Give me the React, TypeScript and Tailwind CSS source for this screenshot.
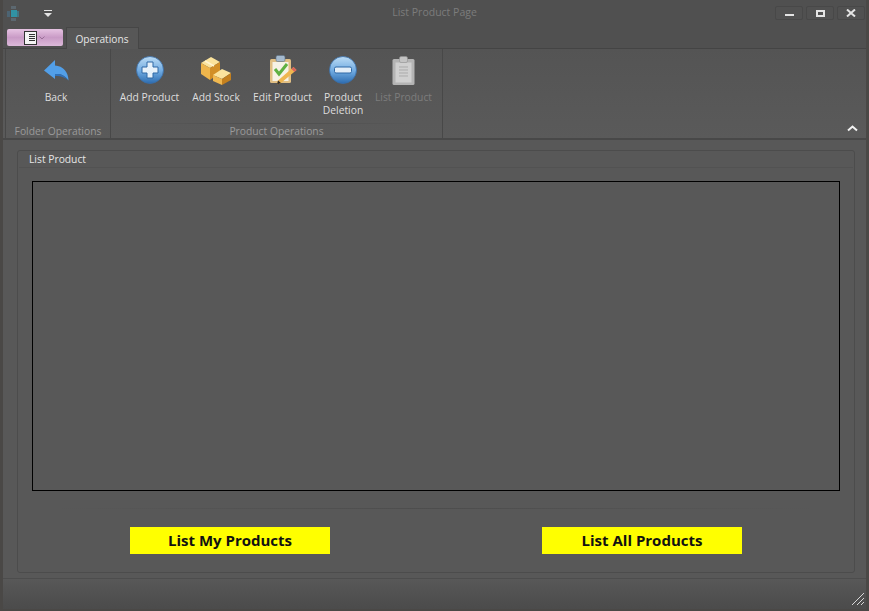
import { ReactNode } from 'react';

const font = { fontFamily: '"Open Sans", "Noto Sans", sans-serif' };

const BackIcon = () => (
  <svg width="25" height="21" viewBox="0 0 25 21">
    <path d="M11 0 L0 10.5 L11 19 L11 14 C16 13.5 21 15 24.5 20.5 C24.5 12 19 6 11 5.5 Z" fill="#529fe8" />
    <path d="M11 14 C16 13.5 21 15 24.5 20.5 C21 17 16 15.5 11 16 Z" fill="#2f70b8" />
  </svg>
);

const RoundIcon = ({ minus }: { minus?: boolean }) => (
  <svg width="28" height="28" viewBox="0 0 28 28">
    <defs>
      <linearGradient id={minus ? 'gm' : 'gp'} x1="0" y1="0" x2="0" y2="1">
        <stop offset="0" stopColor="#bcdcf5" />
        <stop offset="0.55" stopColor="#6ea9e0" />
        <stop offset="1" stopColor="#2c6cb0" />
      </linearGradient>
    </defs>
    <circle cx="14" cy="14" r="13.5" fill={`url(#${minus ? 'gm' : 'gp'})`} stroke="#3a6fa8" strokeWidth="0.8" />
    {minus ? (
      <rect x="5.5" y="11" width="17" height="6" rx="1.5" fill="#e3eef8" stroke="#2f69a6" />
    ) : (
      <path d="M11 6 H17 V11 H22 V17 H17 V22 H11 V17 H6 V11 H11 Z" fill="#e6f1fa" stroke="#2f69a6" strokeLinejoin="round" />
    )}
  </svg>
);

const BoxesIcon = () => (
  <svg width="32" height="29" viewBox="0 0 32 29">
    <path d="M1 7 L11 1 L20 6 L10 12 Z" fill="#fbe39c" />
    <path d="M1 7 L10 12 L10 24 L1 18 Z" fill="#eeb54c" />
    <path d="M10 12 L20 6 L20 17 L10 24 Z" fill="#d28f27" />
    <path d="M13 19 L22 13 L31 17 L22 23 Z" fill="#fbe39c" />
    <path d="M13 19 L22 23 L22 29 L13 25 Z" fill="#f0b850" />
    <path d="M22 23 L31 17 L31 24 L22 29 Z" fill="#c4801e" />
    <path d="M5 5 L14 10" stroke="#fff3cf" strokeWidth="1.5" />
  </svg>
);

const EditIcon = () => (
  <svg width="28" height="30" viewBox="0 0 28 30">
    <rect x="1" y="4" width="21" height="24" rx="1.5" fill="#e1bf84" />
    <rect x="3.5" y="7" width="16" height="19" fill="#f6f2e6" />
    <rect x="7" y="0.5" width="9" height="6" rx="1.5" fill="#a5bace" stroke="#5d7085" strokeWidth="0.6" />
    <path d="M6 14 L10 19 L18 9" fill="none" stroke="#5fb043" strokeWidth="3" />
    <path d="M24.5 12 L27.5 15 L12 28 L8 29.5 L9 25.5 Z" fill="#efb650" />
    <path d="M24.5 12 L27.5 15 L25.5 17 L22.5 14 Z" fill="#d9645a" />
    <path d="M8 29.5 L9 25.5 L12 28 Z" fill="#33302c" />
  </svg>
);

const ClipboardIcon = () => (
  <svg width="23" height="29" viewBox="0 0 23 29">
    <rect x="0.5" y="3" width="22" height="26" rx="1.5" fill="#b4b4b4" />
    <rect x="3.5" y="6.5" width="16" height="20" fill="#d0d0d0" />
    <rect x="7.5" y="0.5" width="8" height="6" rx="1.5" fill="#c4c4c4" stroke="#929292" strokeWidth="0.6" />
    <path d="M7 11 H16 M7 14 H16 M7 17 H16 M7 20 H16" stroke="#ababab" />
  </svg>
);

const RibbonButton = ({
  icon,
  label,
  width,
  disabled,
}: {
  icon: ReactNode;
  label: ReactNode;
  width: string;
  disabled?: boolean;
}) => (
  <div className={`flex flex-col items-center pt-[5px] ${width}`}>
    <div className="flex h-[32px] items-center justify-center">{icon}</div>
    <div
      className={`mt-[5px] text-center text-[10.3px] leading-[13px] whitespace-nowrap ${
        disabled ? 'text-[#7d7d7d]' : 'text-[#dedede]'
      }`}
    >
      {label}
    </div>
  </div>
);

const WindowButton = ({ children }: { children: ReactNode }) => (
  <div className="flex h-[14px] w-[28px] items-center justify-center rounded-[2px] border border-[#484848] bg-[#515151]">
    {children}
  </div>
);

const GroupLabel = ({ children }: { children: ReactNode }) => (
  <div className="h-[14px] text-center text-[10.3px] leading-[14px] text-[#9a9a9a]">{children}</div>
);

const ActionButton = ({ children }: { children: ReactNode }) => (
  <button className="h-[27px] w-[200px] bg-[#ffff00] text-[15px] font-bold text-[#111]">{children}</button>
);

export default function App() {
  return (
    <div className="flex h-[611px] w-[869px] flex-col overflow-hidden border-x-[3px] border-b-[2px] border-[#4a4846] bg-[#555555]" style={font}>
      {/* title bar */}
      <div className="flex h-[26px] shrink-0 items-center bg-[#505050] pl-[4px] pr-[1px]">
        <svg width="13" height="15" viewBox="0 0 13 15" opacity="0.8">
          <rect x="4" y="0" width="5" height="3" fill="#5f6f78" />
          <rect x="0" y="5" width="3" height="6" fill="#4d6a7c" />
          <rect x="4" y="4" width="6" height="7" fill="#2aa3b8" />
          <rect x="10" y="5" width="2" height="6" fill="#3f7d8e" />
          <rect x="4" y="12" width="5" height="3" fill="#5f6f78" />
        </svg>
        <svg className="ml-[24px]" width="8" height="7" viewBox="0 0 8 7">
          <rect width="8" height="1" fill="#e4e4e4" />
          <path d="M0 3 H8 L4 7 Z" fill="#e4e4e4" />
        </svg>
        <div className="flex-1 pl-[42px] text-center text-[10.5px] text-[#7c7c7c]">List Product Page</div>
        <div className="flex gap-[3px]">
          <WindowButton>
            <div className="mt-[4px] h-[2px] w-[9px] bg-[#e4e4e4]" />
          </WindowButton>
          <WindowButton>
            <div className="h-[7px] w-[9px] border-2 border-[#e4e4e4]" />
          </WindowButton>
          <WindowButton>
            <svg width="10" height="8" viewBox="0 0 10 8">
              <path d="M1 0.5 L9 7.5 M9 0.5 L1 7.5" stroke="#e4e4e4" strokeWidth="2" />
            </svg>
          </WindowButton>
        </div>
      </div>

      {/* tabs */}
      <div className="flex h-[23px] shrink-0 items-start border-b border-[#444444] bg-[#505050] pl-[4px]">
        <div className="mt-[3px] flex h-[17px] w-[56px] items-center justify-center rounded-[2px] bg-gradient-to-b from-[#e6c3e2] via-[#c99bc6] to-[#dcb9d9]">
          <div className="ml-[-2px] flex h-[14px] w-[13px] flex-col justify-center gap-[1px] border border-[#333] bg-[#f4f4f4] pl-[4px] pr-[1px]">
            <div className="h-[1px] bg-[#333]" />
            <div className="h-[1px] bg-[#333]" />
            <div className="h-[1px] bg-[#333]" />
            <div className="h-[1px] bg-[#333]" />
          </div>
          <svg className="ml-[2px]" width="6" height="4" viewBox="0 0 6 4">
            <path d="M0.5 0.5 L3 3 L5.5 0.5" fill="none" stroke="#9a6f98" />
          </svg>
        </div>
        <div className="ml-[3px] mt-[1px] flex h-[22px] w-[73px] items-center justify-center border-x border-t border-[#464646] bg-[#575757] pr-[1px] pt-[2px] text-[10.2px] text-[#e6e6e6]">
          Operations
        </div>
      </div>

      {/* ribbon */}
      <div className="relative flex h-[91px] shrink-0 border-b-2 border-[#484848] bg-gradient-to-b from-[#545454] to-[#5a5a5a] pl-[2px]">
        <div className="flex w-[106px] flex-col border-x border-[#484848]">
          <div className="flex flex-1 justify-center pr-[4px]">
            <RibbonButton icon={<BackIcon />} label="Back" width="w-[60px]" />
          </div>
          <GroupLabel>Folder Operations</GroupLabel>
        </div>
        <div className="flex w-[332px] flex-col border-r border-[#484848]">
          <div className="flex flex-1 pl-[5px]">
            <RibbonButton icon={<RoundIcon />} label="Add Product" width="w-[67px]" />
            <RibbonButton icon={<BoxesIcon />} label="Add Stock" width="w-[66px]" />
            <RibbonButton icon={<EditIcon />} label="Edit Product" width="w-[67px]" />
            <RibbonButton
              icon={<RoundIcon minus />}
              label={
                <>
                  Product
                  <br />
                  Deletion
                </>
              }
              width="w-[54px]"
            />
            <RibbonButton icon={<ClipboardIcon />} label="List Product" width="w-[67px]" disabled />
          </div>
          <div className="mx-[20px] h-[1px] bg-gradient-to-r from-transparent via-[#4d4d4d] to-transparent" />
          <GroupLabel>Product Operations</GroupLabel>
        </div>
        <svg className="absolute right-[8px] top-[76px]" width="11" height="7" viewBox="0 0 11 7">
          <path d="M1 5.5 L5.5 1.5 L10 5.5" fill="none" stroke="#f2f2f2" strokeWidth="2" />
        </svg>
      </div>

      {/* content */}
      <div className="flex flex-1 flex-col bg-[#585858] pl-[14px] pr-[11px] pt-[10px]">
        <div className="flex h-[423px] flex-col rounded-[3px] border border-[#4c4c4c]">
          <div className="mx-[1px] h-[17px] border-b border-[#525252] pl-[10px] text-[10.3px] leading-[17px] text-[#e6e6e6]">
            List Product
          </div>
          <div className="mx-[14px] mt-[13px] h-[310px] border border-black" />
          <div className="mx-[40px] mt-[17px] h-[1px] bg-gradient-to-r from-transparent via-[#4d4d4d] to-transparent" />
          <div className="mt-[18px] flex justify-between px-[112px]">
            <ActionButton>List My Products</ActionButton>
            <ActionButton>List All Products</ActionButton>
          </div>
        </div>
      </div>

      {/* status bar */}
      <div className="flex h-[31px] shrink-0 items-end justify-end border-t border-[#4d4d4d] bg-gradient-to-b from-[#585858] to-[#4b4b4b] pb-[3px] pr-[1px]">
        <svg width="14" height="14" viewBox="0 0 14 14">
          <path d="M1 13 L13 1 M6 13 L13 6 M10 13 L13 10" stroke="#d8d8d8" />
        </svg>
      </div>
    </div>
  );
}
